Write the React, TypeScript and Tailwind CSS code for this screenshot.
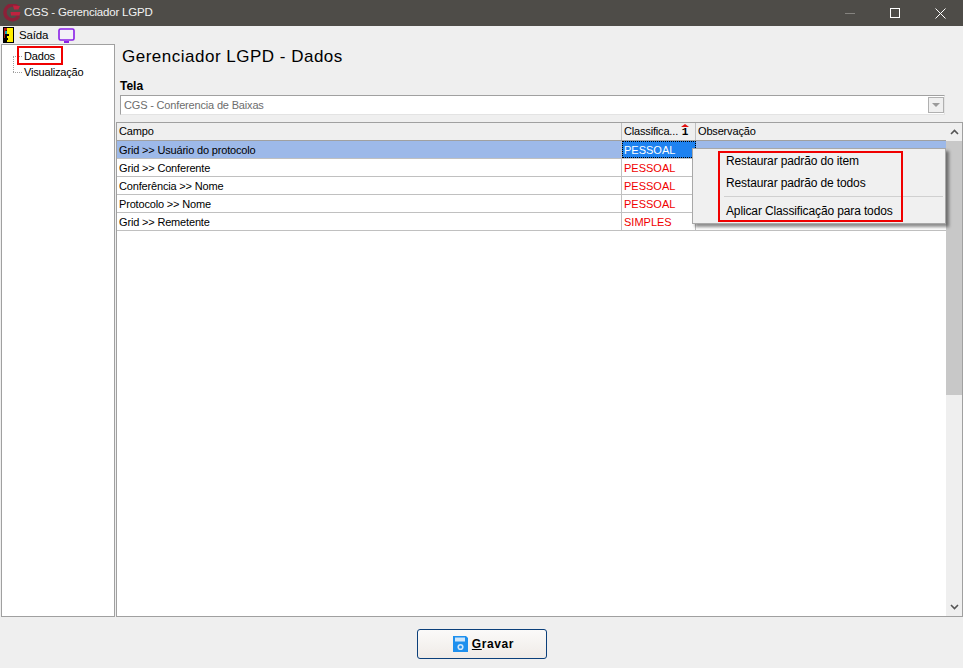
import React from "react";

const rows = [
  { campo: "Grid >> Usuário do protocolo", tipo: "PESSOAL" },
  { campo: "Grid >> Conferente", tipo: "PESSOAL" },
  { campo: "Conferência >> Nome", tipo: "PESSOAL" },
  { campo: "Protocolo >> Nome", tipo: "PESSOAL" },
  { campo: "Grid >> Remetente", tipo: "SIMPLES" },
];

const Logo = () => (
  <svg width="18" height="18" viewBox="0 0 18 18" className="ml-[3px] shrink-0">
    <path d="M15 3.6A7.4 7.4 0 1 0 15.8 12" fill="none" stroke="#8c2038" strokeWidth="3.4" />
    <path d="M7.5 8h10l-1 3.4H8z" fill="#c0223f" />
    <path d="M10 1.5l7 .5-1.6 3.4H11z" fill="#c0223f" />
  </svg>
);

const ExitIcon = () => (
  <svg width="11" height="16" viewBox="0 0 11 16" className="shrink-0">
    <rect width="11" height="16" fill="#000" />
    <rect x="4" y="1" width="6" height="14" fill="#ffee00" />
    <path d="M1 1h3v2L2 4v7H1z" fill="#b01818" />
    <path d="M2 4h2v3H2z" fill="#1aa3b8" />
    <path d="M4 7h2v2H4zM2 11h3v2H2z" fill="#000" />
  </svg>
);

const MonitorIcon = () => (
  <svg width="17" height="15" viewBox="0 0 17 15" className="shrink-0">
    <rect x="1" y="1" width="15" height="11" rx="1.5" fill="#f3f0f8" stroke="#8a1fe6" strokeWidth="1.6" />
    <rect x="6" y="13" width="5" height="2" fill="#8a1fe6" />
  </svg>
);

const SaveIcon = () => (
  <svg width="15" height="16" viewBox="0 0 15 16" className="shrink-0">
    <path d="M0 0h13l2 2v14H0z" fill="#1e90ee" />
    <rect x="2" y="1.5" width="10" height="4" fill="#cfe6fa" />
    <circle cx="7.5" cy="11" r="2.3" fill="none" stroke="#cfe6fa" strokeWidth="1.6" />
  </svg>
);

export default function App() {
  return (
    <div
      className="relative flex h-[668px] w-[963px] flex-col overflow-hidden bg-[#efefef] text-[11px] tracking-[-0.17px] text-black"
      style={{ fontFamily: '"Liberation Sans", Arial, sans-serif' }}
    >
      {/* barra de titulo */}
      <div className="flex h-[26px] shrink-0 items-center bg-[#4e4c48] text-white">
        <Logo />
        <span className="ml-[3px] text-[11.5px] tracking-[-0.2px] text-[#f2f2f2]">CGS - Gerenciador LGPD</span>
        <div className="ml-auto flex items-center">
          <span className="mr-[35px] h-px w-[10px] bg-[#85837f]" />
          <span className="mr-[35px] h-[10px] w-[10px] border border-white" />
          <svg width="11" height="11" viewBox="0 0 11 11" className="mr-[17px]">
            <path d="M0.5 0.5l10 10M10.5 0.5l-10 10" stroke="#fff" strokeWidth="1" />
          </svg>
        </div>
      </div>

      {/* menu */}
      <div className="flex h-[18px] shrink-0 items-center pl-[3px] text-[11.5px]">
        <ExitIcon />
        <span className="ml-[5px] pt-[2px]">Saída</span>
        <span className="ml-[10px]">
          <MonitorIcon />
        </span>
      </div>

      <div className="flex min-h-0 flex-1">
        {/* arvore */}
        <div className="relative ml-[1px] mr-[1px] h-[573px] w-[114px] shrink-0 border border-[#a0a0a0] bg-white pl-[22px] pt-[3px]">
          <div className="h-[16px] leading-[16px]">Dados</div>
          <div className="h-[16px] leading-[16px]">Visualização</div>
          <span className="absolute left-[11px] top-[11px] h-[16px] border-l border-dotted border-[#a0a0a0]" />
          <span className="absolute left-[11px] top-[11px] w-[9px] border-t border-dotted border-[#a0a0a0]" />
          <span className="absolute left-[11px] top-[27px] w-[9px] border-t border-dotted border-[#a0a0a0]" />
        </div>

        {/* conteudo */}
        <div className="flex min-w-0 flex-1 flex-col">
          <div className="ml-[6px] mt-[3px] h-[24px] text-[17px] leading-[20px] tracking-[0.5px]">
            Gerenciador LGPD - Dados
          </div>
          <div className="ml-[4px] mt-[7px] h-[17px] text-[12px] font-bold leading-[16px] tracking-normal">Tela</div>
          <div className="ml-[4px] flex h-[20px] w-[825px] items-center border border-[#a0a0a0] border-r-[#e3e3e3] border-b-[#e3e3e3] bg-white pl-[3px] text-[#6d6d6d]">
            <span>CGS - Conferencia de Baixas</span>
            <span className="ml-auto flex h-[16px] w-[16px] items-center justify-center border border-[#b0b0b0] bg-[#efefef]">
              <span className="h-0 w-0 border-x-[4px] border-t-[4px] border-x-transparent border-t-[#9a9a9a]" />
            </span>
          </div>

          {/* grade */}
          <div className="mt-[7px] flex h-[495px] border border-[#a0a0a0] bg-white">
            <div className="min-w-0 flex-1">
              <div className="flex h-[18px] border-b border-[#a0a0a0] bg-[#efefef] leading-[17px]">
                <div className="w-[505px] shrink-0 border-r border-[#c0c0c0] pl-[2px]">Campo</div>
                <div className="relative w-[74px] shrink-0 border-r border-[#c0c0c0] pl-[2px]">
                  Classifica...
                  <span className="absolute right-[6px] top-[1px] flex flex-col items-center">
                    <span className="h-0 w-0 border-x-[4px] border-b-[3px] border-x-transparent border-b-[#e01010]" />
                    <span
                      className="text-[11px] font-bold leading-[11px]"
                      style={{ fontFamily: '"Liberation Mono", monospace' }}
                    >
                      1
                    </span>
                  </span>
                </div>
                <div className="flex-1 pl-[2px]">Observação</div>
              </div>
              {rows.map((row, i) => (
                <div
                  key={row.campo}
                  className={
                    i === 0
                      ? "flex h-[18px] border-b border-[#c0c0c0] bg-[#9db9e9] leading-[18px]"
                      : "flex h-[18px] border-b border-[#c0c0c0] leading-[18px]"
                  }
                >
                  <div className="w-[505px] shrink-0 border-r border-[#c0c0c0] pl-[2px]">{row.campo}</div>
                  <div
                    className={
                      i === 0
                        ? "w-[74px] shrink-0 border border-dotted border-black bg-[#1e82f0] pl-[1px] leading-[16px] tracking-normal text-white"
                        : "w-[74px] shrink-0 border-r border-[#c0c0c0] pl-[2px] tracking-normal text-[#f00000]"
                    }
                  >
                    {row.tipo}
                  </div>
                  <div className="flex-1" />
                </div>
              ))}
            </div>

            {/* barra de rolagem */}
            <div className="flex w-[16px] shrink-0 flex-col items-center bg-[#efefef]">
              <svg width="9" height="6" viewBox="0 0 9 6" className="mb-[6px] mt-[6px]">
                <path d="M1 5l3.5-3.5L8 5" fill="none" stroke="#555" strokeWidth="1.6" />
              </svg>
              <div className="h-[254px] w-full bg-[#c8c8c8]" />
              <svg width="9" height="6" viewBox="0 0 9 6" className="mt-auto mb-[6px]">
                <path d="M1 1l3.5 3.5L8 1" fill="none" stroke="#555" strokeWidth="1.6" />
              </svg>
            </div>
          </div>

          <div className="flex flex-1 items-start justify-center pr-[116px] pt-[12px]">
            <button className="flex h-[30px] w-[130px] items-center justify-center gap-[4px] rounded-[3px] border border-[#0b3f7a] bg-gradient-to-b from-[#fbfaf9] to-[#efebe7] pl-[4px] text-[12px] font-bold tracking-[0.6px]">
              <SaveIcon />
              <span>
                <span className="underline">G</span>ravar
              </span>
            </button>
          </div>
        </div>
      </div>

      {/* destaque da arvore */}
      <div className="absolute left-[17px] top-[46px] h-[19px] w-[46px] border-2 border-[#f00000]" />

      {/* menu de contexto */}
      <div className="absolute left-[692px] top-[148px] w-[254px] border border-[#a8a8a8] bg-[#f0f0f0] pb-[1px] pl-[33px] pt-[1px] text-[12px] tracking-[-0.13px] shadow-[3px_3px_3px_rgba(0,0,0,0.45)]">
        <div className="flex h-[22px] items-center">Restaurar padrão do item</div>
        <div className="flex h-[22px] items-center">Restaurar padrão de todos</div>
        <div className="-ml-[2px] mb-[3px] mr-[2px] mt-[2px] h-px bg-[#d0d0d0]" />
        <div className="flex h-[22px] items-center">Aplicar Classificação para todos</div>
        <div className="absolute left-[25px] top-[2px] h-[71px] w-[185px] border-2 border-[#f00000]" />
      </div>
    </div>
  );
}
